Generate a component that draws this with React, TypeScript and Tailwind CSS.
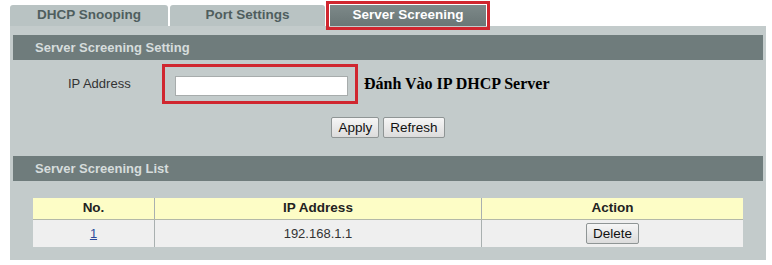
const font = { fontFamily: '"Liberation Sans", Arial, sans-serif' };

const tabs = [
  { label: "DHCP Snooping", width: "w-[158px]", ml: "ml-0", active: false },
  { label: "Port Settings", width: "w-[155px]", ml: "ml-[2px]", active: false },
  { label: "Server Screening", width: "w-[156px]", ml: "ml-[5px]", active: true },
];

function SectionHeader({ title }: { title: string }) {
  return (
    <div className="h-[25px] bg-[#6f7c7c] pl-[22px] flex items-center text-[13px] font-bold text-[#d6dcdc]">
      {title}
    </div>
  );
}

function Btn({ children }: { children: React.ReactNode }) {
  return (
    <button className="h-[21px] px-[6px] border border-[#8f9595] rounded-[2px] bg-gradient-to-b from-[#f6f6f6] to-[#dcdcdc] text-[13.5px] leading-none text-[#111]">
      {children}
    </button>
  );
}

export default function App() {
  return (
    <div className="w-[772px] h-[265px] bg-white pt-[5px] pl-[10px]" style={font}>
      {/* Tabs */}
      <div className="flex h-[21px]">
        {tabs.map((t) =>
          t.active ? (
            <div
              key={t.label}
              className={`${t.width} ${t.ml} h-[21px] flex items-center justify-center text-[13.5px] font-bold text-white bg-gradient-to-b from-[#7d8989] to-[#6a7676] outline-[3px] outline-solid outline-[#d0262f] outline-offset-[1px]`}
            >
              {t.label}
            </div>
          ) : (
            <div
              key={t.label}
              className={`${t.width} ${t.ml} h-[21px] rounded-t-[3px] flex items-center justify-center text-[13.5px] font-bold text-[#4f5e5e] bg-[#b9c3c3]`}
            >
              {t.label}
            </div>
          )
        )}
      </div>

      {/* Panel */}
      <div className="w-[756px] bg-[#c3cbcb] pt-[9px] px-[3px] pb-[13px]">
        <SectionHeader title="Server Screening Setting" />

        <div className="flex items-center mt-[4px] pl-[55px]">
          <span className="w-[94px] text-[13px] text-[#333]">IP Address</span>
          <div className="border-[3px] border-[#d0262f] pt-[9px] pb-[5px] pl-[10px] pr-[7px]">
            <input className="block w-[173px] h-[20px] bg-white border border-[#a7acac] outline-none" />
          </div>
          <span
            className="ml-[6px] text-[16px] font-bold text-black"
            style={{ fontFamily: '"Liberation Serif", "Times New Roman", serif' }}
          >
            Đánh Vào IP DHCP Server
          </span>
        </div>

        <div className="flex justify-center gap-[4px] mt-[13px]">
          <Btn>Apply</Btn>
          <Btn>Refresh</Btn>
        </div>

        <div className="mt-[18px]">
          <SectionHeader title="Server Screening List" />
        </div>

        <div className="mx-[20px] mt-[17px]">
          <div className="grid grid-cols-[122px_327px_261px] h-[22px] bg-[#fdfdc6] border-b border-[#b3b8a8] text-[13.5px] font-bold text-[#222]">
            <div className="flex items-center justify-center border-r border-[#a9b0b0]">No.</div>
            <div className="flex items-center justify-center border-r border-[#a9b0b0]">IP Address</div>
            <div className="flex items-center justify-center">Action</div>
          </div>
          <div className="grid grid-cols-[122px_327px_261px] h-[27px] bg-[#efefef] text-[13px] text-[#333]">
            <div className="flex items-center justify-center border-r border-[#a9b0b0]">
              <span className="underline text-[#2b4a9c]">1</span>
            </div>
            <div className="flex items-center justify-center border-r border-[#a9b0b0]">192.168.1.1</div>
            <div className="flex items-center justify-center">
              <Btn>Delete</Btn>
            </div>
          </div>
        </div>
      </div>
    </div>
  );
}
